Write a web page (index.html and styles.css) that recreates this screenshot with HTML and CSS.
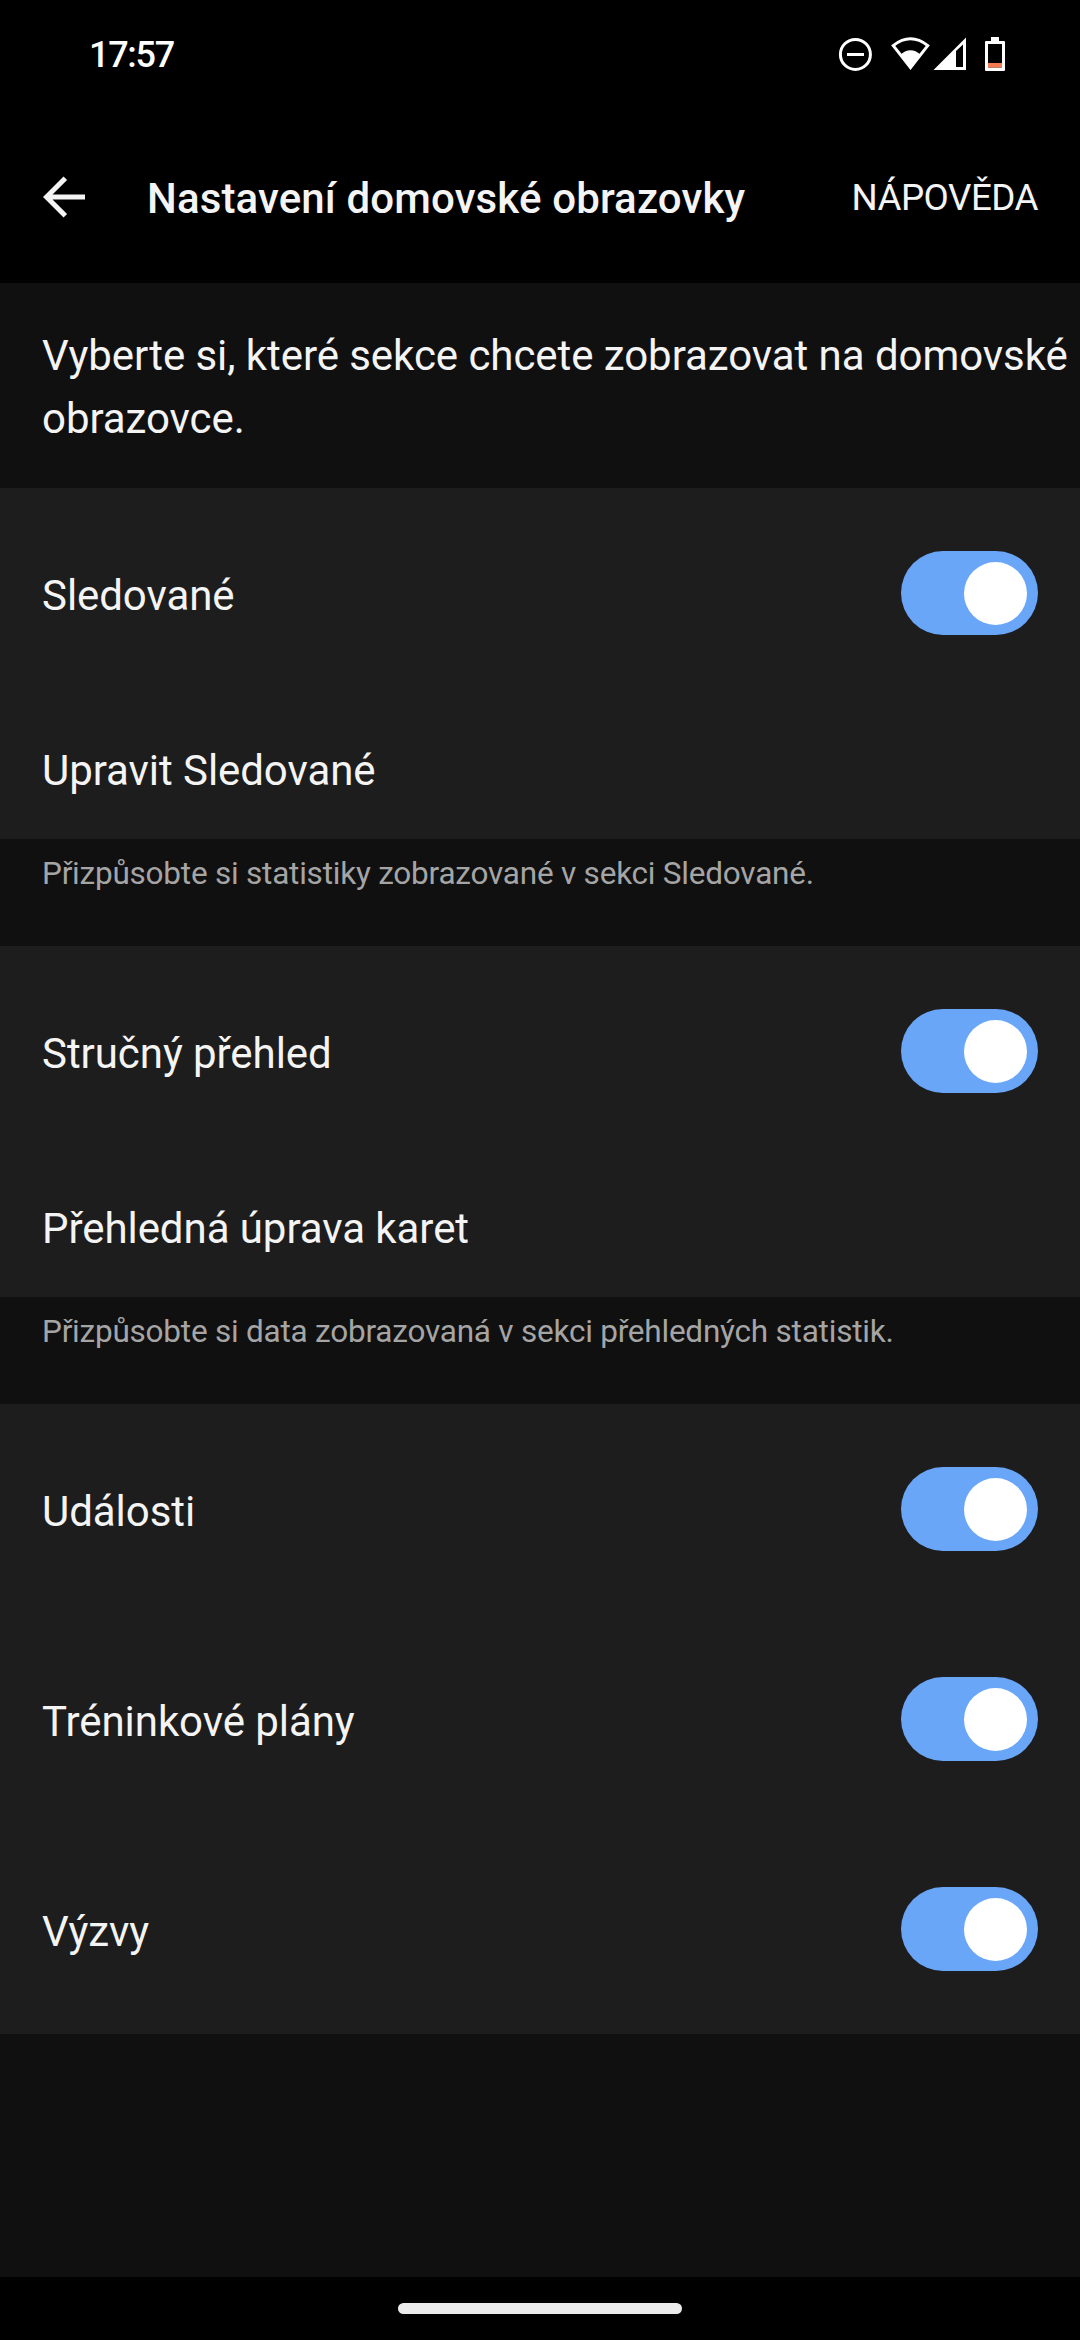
FILE: index.html
```html
<!DOCTYPE html>
<html lang="cs">
<head>
<meta charset="utf-8">
<title>Nastavení domovské obrazovky</title>
<link rel="stylesheet" href="styles.css">
</head>
<body>
<div class="status">
  <span class="clock">17:57</span>
  <svg class="status-icons" width="170" height="36" viewBox="838 36 170 36">
    <circle cx="855.400" cy="54.400" r="15" fill="none" stroke="#fff" stroke-width="3"/>
    <path d="M847 54.500h17" stroke="#fff" stroke-width="3"/>
    <path d="M893.200 45.600Q910.500 32 927.800 45.600L910.500 67.500Z" fill="none" stroke="#fff" stroke-width="3"/>
    <path d="M900.500 54.500Q910.500 46 920.500 54.500L910.500 69.500Z" fill="#fff"/>
    <path fill-rule="evenodd" d="M966 37.500V70H933.500ZM956 51V67H963V44.500Z" fill="#fff"/>
    <path fill-rule="evenodd" d="M986 41h5v-4h8v4h5q1 0 1 1v28q0 1-1 1h-18q-1 0-1-1v-28q0-1 1-1zM988 44v23.500h14v-23.500z" fill="#fff"/>
    <path d="M988 63h14v4.500h-14z" fill="#f47a52"/>
  </svg>
</div>
<header class="appbar">
  <svg class="back" width="42" height="42" viewBox="0 0 42 42"><path d="M42 21H4M22.300 2.200L3.500 21L22.300 39.800" fill="none" stroke="#f4f4f4" stroke-width="5"/></svg>
  <h1 class="title">Nastavení domovské obrazovky</h1>
  <span class="help">NÁPOVĚDA</span>
</header>
<main class="content">
  <p class="intro">Vyberte si, které sekce chcete zobrazovat na domovské obrazovce.</p>
  <section class="group">
    <div class="row"><span class="label">Sledované</span><span class="switch"></span></div>
    <div class="row link"><span class="label">Upravit Sledované</span></div>
  </section>
  <p class="note">Přizpůsobte si statistiky zobrazované v sekci Sledované.</p>
  <section class="group">
    <div class="row"><span class="label">Stručný přehled</span><span class="switch"></span></div>
    <div class="row link"><span class="label">Přehledná úprava karet</span></div>
  </section>
  <p class="note">Přizpůsobte si data zobrazovaná v sekci přehledných statistik.</p>
  <section class="group">
    <div class="row"><span class="label">Události</span><span class="switch"></span></div>
    <div class="row"><span class="label">Tréninkové plány</span><span class="switch"></span></div>
    <div class="row"><span class="label">Výzvy</span><span class="switch"></span></div>
  </section>
</main>
<footer class="nav"><span class="handle"></span></footer>
</body>
</html>
```
FILE: styles.css
```css
* { box-sizing: border-box; }
body { margin: 0; height: 2340px; display: flex; flex-direction: column; background: #000; color: #f4f4f4; font-family: Roboto, sans-serif; }
.status { height: 115px; padding: 36px 72px 0 89px; display: flex; justify-content: space-between; align-items: flex-start; color: #fff; }
.clock { font-size: 36px; line-height: 38px; font-weight: 500; letter-spacing: -1.3px; }
.appbar { height: 168px; padding: 0 42px; display: flex; align-items: center; }
.back { margin: 0 0 5px 1px; }
.title { margin: 0 0 0 62px; font-size: 42px; font-weight: 500; line-height: 50px; letter-spacing: 0.13px; }
.help { margin: 0 0 3px auto; font-size: 36.75px; letter-spacing: -0.5px; }
.content { flex: 1; background: #101010; }
.intro { margin: 0; height: 205px; padding: 41px 0 0 42px; font-size: 42px; line-height: 63px; letter-spacing: -0.06px; }
.group { background: #1d1d1d; }
.row { height: 210px; padding: 0 42px; display: flex; align-items: center; justify-content: space-between; font-size: 42px; letter-spacing: -0.06px; }
.label { padding-top: 4px; }
.link { height: 141px; }
.note { margin: 0; height: 107px; padding: 15px 42px 0; font-size: 31.5px; line-height: 40px; letter-spacing: -0.22px; color: #a5a5a5; }
.switch { width: 137px; height: 84px; padding: 11px 11px 10px; border-radius: 42px; background: #6aa6f8; display: flex; justify-content: flex-end; }
.switch::after { content: ""; width: 63px; height: 63px; border-radius: 50%; background: #fff; }
.nav { height: 63px; display: flex; align-items: center; justify-content: center; }
.handle { width: 284px; height: 11px; border-radius: 6px; background: #ececec; }
```
